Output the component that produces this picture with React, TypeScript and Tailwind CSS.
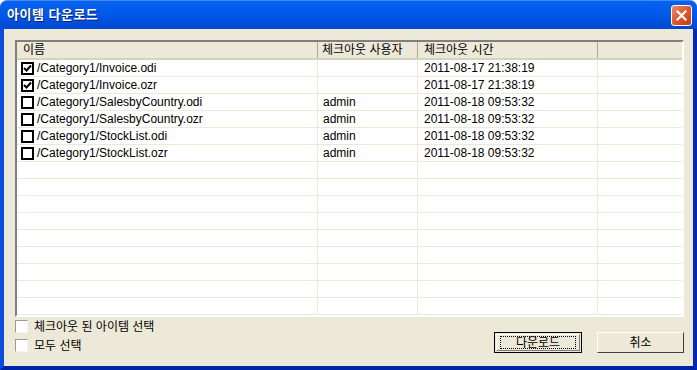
import React from "react";

const font = { fontFamily: '"Liberation Sans", "Noto Sans CJK KR", sans-serif' };

type Row = { name: string; user: string; time: string; checked: boolean };

const rows: Row[] = [
  { name: "/Category1/Invoice.odi", user: "", time: "2011-08-17 21:38:19", checked: true },
  { name: "/Category1/Invoice.ozr", user: "", time: "2011-08-17 21:38:19", checked: true },
  { name: "/Category1/SalesbyCountry.odi", user: "admin", time: "2011-08-18 09:53:32", checked: false },
  { name: "/Category1/SalesbyCountry.ozr", user: "admin", time: "2011-08-18 09:53:32", checked: false },
  { name: "/Category1/StockList.odi", user: "admin", time: "2011-08-18 09:53:32", checked: false },
  { name: "/Category1/StockList.ozr", user: "admin", time: "2011-08-18 09:53:32", checked: false },
];

function ListCheck({ checked }: { checked: boolean }) {
  return (
    <span className="mr-[3px] flex h-[13px] w-[13px] shrink-0 items-center justify-center border-2 border-black bg-white">
      {checked && (
        <svg width="9" height="9" viewBox="0 0 9 9">
          <path d="M1 4 L3.5 6.5 L8 1.5" stroke="black" strokeWidth="2" fill="none" />
        </svg>
      )}
    </span>
  );
}

function Cell({ w, children, last }: { w: string; children?: React.ReactNode; last?: boolean }) {
  return (
    <div className={`${w} flex h-full items-center overflow-hidden whitespace-nowrap ${last ? "" : "border-r border-[#ece9d8]"}`}>
      {children}
    </div>
  );
}

function App() {
  const empty = Array.from({ length: 10 });

  return (
    <div className="flex h-[370px] w-[697px] flex-col overflow-hidden text-[12px] text-black" style={font}>
      {/* title bar */}
      <div className="flex h-[29px] shrink-0 items-center justify-between rounded-t-[7px] border-t border-[#3c8cfc] bg-gradient-to-b from-[#0a61f0] via-[#0058e8] to-[#0047d0] pl-[7px] pr-[5px]">
        <span className="text-[13px] font-bold tracking-[0.5px] text-white [text-shadow:1px_1px_0_#0a1e6c]">
          아이템 다운로드
        </span>
        <button
          type="button"
          aria-label="Close"
          className="flex h-[21px] w-[21px] items-center justify-center rounded-[3px] border border-white bg-gradient-to-br from-[#e88a6a] via-[#e0552c] to-[#c43d14]"
        >
          <svg width="11" height="11" viewBox="0 0 11 11">
            <path d="M1.5 1.5 L9.5 9.5 M9.5 1.5 L1.5 9.5" stroke="white" strokeWidth="2.2" strokeLinecap="square" />
          </svg>
        </button>
      </div>

      {/* body */}
      <div className="flex min-h-0 flex-1 flex-col border-x-4 border-b-4 border-l-[#0a4ee0] border-r-[#0028b8] border-b-[#0024a8] bg-[#ece9d8] pl-[11px] pr-[9px] pt-[11px]">
        <div className="flex h-[277px] flex-col overflow-hidden border-2 border-l-[#7f7f7f] border-t-[#7f7f7f] border-r-[#fdfdfb] border-b-[#fdfdfb] bg-white">
          {/* header */}
          <div className="flex h-[18px] shrink-0 border-b-2 border-[#d6d2c2] bg-[#ece9d8]">
            <Cell w="w-[300px]">
              <span className="pl-[6px]">이름</span>
            </Cell>
            <div className="w-px bg-[#aca899]" />
            <Cell w="w-[99px]">
              <span className="pl-[4px]">체크아웃 사용자</span>
            </Cell>
            <div className="w-px bg-[#aca899]" />
            <Cell w="w-[179px]">
              <span className="pl-[6px]">체크아웃 시간</span>
            </Cell>
            <div className="w-px bg-[#aca899]" />
            <Cell w="flex-1" last />
          </div>
          {/* rows */}
          {rows.map((r) => (
            <div key={r.name} className="flex h-[17px] shrink-0 border-b border-[#ece9d8]">
              <Cell w="w-[301px]">
                <span className="flex items-center pl-[4px]">
                  <ListCheck checked={r.checked} />
                  {r.name}
                </span>
              </Cell>
              <Cell w="w-[100px]">
                <span className="pl-[5px]">{r.user}</span>
              </Cell>
              <Cell w="w-[180px]">
                <span className="pl-[6px]">{r.time}</span>
              </Cell>
              <Cell w="flex-1" last />
            </div>
          ))}
          {empty.map((_, i) => (
            <div key={i} className="flex h-[17px] shrink-0 border-b border-[#ece9d8]">
              <Cell w="w-[301px]" />
              <Cell w="w-[100px]" />
              <Cell w="w-[180px]" />
              <Cell w="flex-1" last />
            </div>
          ))}
        </div>

        {/* bottom controls */}
        <div className="flex flex-1 items-start justify-between pt-[3px]">
          <div className="flex flex-col gap-[6px]">
            <label className="flex h-[13px] items-center gap-[6px] leading-none">
              <span className="h-[13px] w-[13px] border border-b-[#f5f4ef] border-l-[#9d9a8d] border-r-[#f5f4ef] border-t-[#9d9a8d] bg-white" />
              체크아웃 된 아이템 선택
            </label>
            <label className="flex h-[13px] items-center gap-[6px] leading-none">
              <span className="h-[13px] w-[13px] border border-b-[#f5f4ef] border-l-[#9d9a8d] border-r-[#f5f4ef] border-t-[#9d9a8d] bg-white" />
              모두 선택
            </label>
          </div>
          <div className="mt-[12px] flex gap-[15px]">
            <button
              type="button"
              className="h-[21px] w-[88px] border border-black bg-[#ece9d8] p-[1px]"
            >
              <span className="flex h-full w-full items-center justify-center border border-b-[#808080] border-l-white border-r-[#808080] border-t-white">
                <span className="flex h-[13px] w-[76px] items-center justify-center border border-dotted border-black leading-none">
                  다운로드
                </span>
              </span>
            </button>
            <button
              type="button"
              className="flex h-[21px] w-[87px] items-center justify-center border border-b-[#404040] border-l-white border-r-[#404040] border-t-white bg-[#ece9d8]"
            >
              취소
            </button>
          </div>
        </div>
      </div>
    </div>
  );
}

export default App;
